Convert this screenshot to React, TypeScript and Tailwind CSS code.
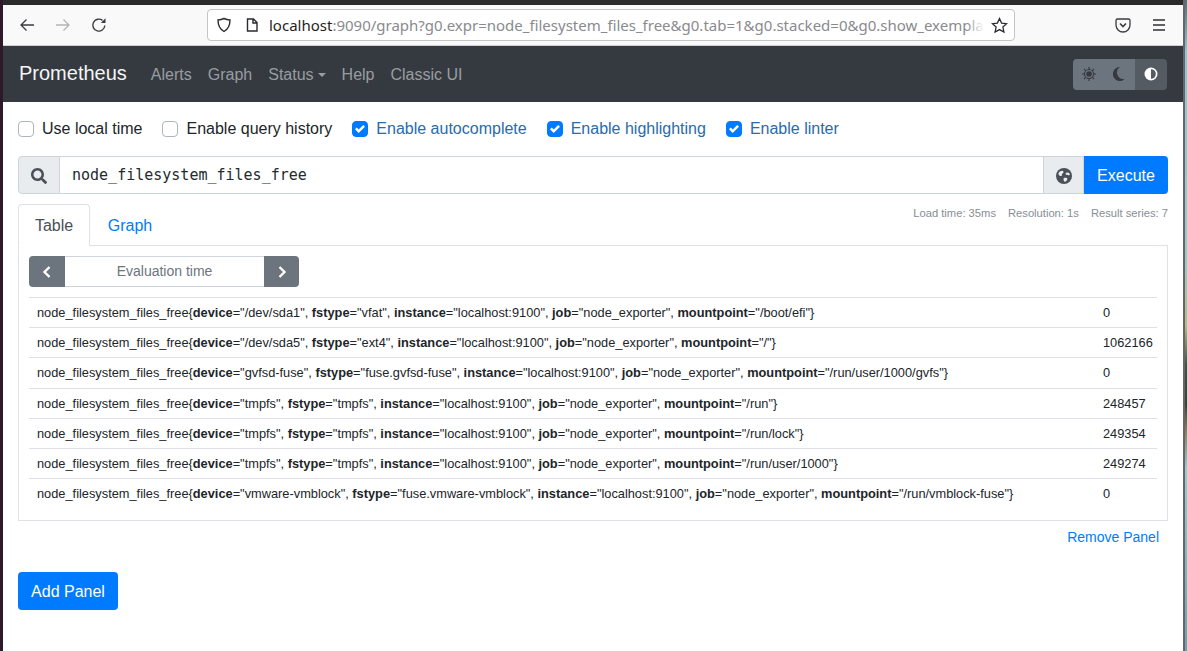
import React from "react";

const sans = "font-['Liberation_Sans',Arial,sans-serif]";

const Check = ({ on, label, mr }: { on: boolean; label: string; mr: string }) => (
  <label className={`flex items-center ${mr}`}>
    <span className={`w-4 h-4 rounded-[4px] border flex items-center justify-center ${on ? "bg-[#007bff] border-[#007bff]" : "bg-white border-[#adb5bd]"}`}>
      {on && (
        <svg width="10" height="10" viewBox="0 0 8 8"><path fill="#fff" d="M6.564.75l-3.59 3.612-1.538-1.55L0 4.26l2.974 2.99L8 2.193z" /></svg>
      )}
    </span>
    <span className={`ml-2 ${on ? "text-[#2a6ba8]" : "text-[#212529]"}`}>{label}</span>
  </label>
);

const rows: { labels: [string, string][]; value: string }[] = [
  { labels: [["device", "/dev/sda1"], ["fstype", "vfat"], ["instance", "localhost:9100"], ["job", "node_exporter"], ["mountpoint", "/boot/efi"]], value: "0" },
  { labels: [["device", "/dev/sda5"], ["fstype", "ext4"], ["instance", "localhost:9100"], ["job", "node_exporter"], ["mountpoint", "/"]], value: "1062166" },
  { labels: [["device", "gvfsd-fuse"], ["fstype", "fuse.gvfsd-fuse"], ["instance", "localhost:9100"], ["job", "node_exporter"], ["mountpoint", "/run/user/1000/gvfs"]], value: "0" },
  { labels: [["device", "tmpfs"], ["fstype", "tmpfs"], ["instance", "localhost:9100"], ["job", "node_exporter"], ["mountpoint", "/run"]], value: "248457" },
  { labels: [["device", "tmpfs"], ["fstype", "tmpfs"], ["instance", "localhost:9100"], ["job", "node_exporter"], ["mountpoint", "/run/lock"]], value: "249354" },
  { labels: [["device", "tmpfs"], ["fstype", "tmpfs"], ["instance", "localhost:9100"], ["job", "node_exporter"], ["mountpoint", "/run/user/1000"]], value: "249274" },
  { labels: [["device", "vmware-vmblock"], ["fstype", "fuse.vmware-vmblock"], ["instance", "localhost:9100"], ["job", "node_exporter"], ["mountpoint", "/run/vmblock-fuse"]], value: "0" },
];

export default function App() {
  return (
    <div className={`w-[1187px] h-[651px] overflow-hidden flex bg-[#2b2a2a] ${sans}`}>
      <div className="w-[3px] bg-[#2c1a2a]" />
      <div className="w-[1180px] flex flex-col">
        <div className="h-[5px] bg-[#2b2a2a]" />
        <div className="h-[41px] bg-[#f9f9fa] border-b border-[#cfcfd3] flex items-center font-['Noto_Sans',sans-serif]">
          <svg className="ml-[15px] shrink-0" width="18" height="18" viewBox="0 0 18 18" fill="none" stroke="#3b3b40" strokeWidth="1.3"><path d="M16 9H3M8.5 3.500L3 9l5.500 5.500" /></svg>
          <svg className="ml-[18px] shrink-0" width="18" height="18" viewBox="0 0 18 18" fill="none" stroke="#b4b4b7" strokeWidth="1.3"><path d="M2 9h13M9.500 3.500L15 9l-5.500 5.500" /></svg>
          <svg className="ml-[18px] shrink-0" width="18" height="18" viewBox="0 0 18 18" fill="none" stroke="#3b3b40" strokeWidth="1.4"><path d="M14.800 9.500A6 6 0 1 1 12.500 4.400" /><path d="M15.500 2.300v4.700h-4.700z" fill="#3b3b40" stroke="none" /></svg>
          <div className="ml-[99px] w-[808px] h-[32px] shrink-0 bg-white border border-[#c5c5c9] rounded-[4px] flex items-center text-[15px]">
            <svg className="ml-[8px] shrink-0" width="16" height="16" viewBox="0 0 16 16" fill="none" stroke="#2b2b30" strokeWidth="1.4"><path d="M8 1.500c2 1 3.800 1.400 6 1.500 0 5-1.600 9-6 11.500C3.600 12 2 8 2 3c2.200-.1 4-.5 6-1.500z" /></svg>
            <svg className="ml-[13px] shrink-0" width="14" height="16" viewBox="0 0 14 16" fill="none" stroke="#2b2b30" strokeWidth="1.4"><path d="M2.500 2h6L12 5.500V14H2.500zM8 2v4h4" /></svg>
            <span className="ml-[10px] whitespace-nowrap text-[#8a8a8e] relative">
              <span className="text-[#1f1f23]">localhost</span>:9090/graph?g0.expr=node_filesystem_files_free&amp;g0.tab=1&amp;g0.stacked=0&amp;g0.show_exempla
              <span className="absolute right-0 top-0 bottom-0 w-[18px] bg-gradient-to-r from-transparent to-white" />
            </span>
            <svg className="ml-auto mr-[6px] shrink-0" width="17" height="17" viewBox="0 0 17 17" fill="none" stroke="#2b2b30" strokeWidth="1.3"><path d="M8.500 1.500l2.100 4.600 5 .6-3.700 3.400 1 5-4.400-2.500-4.400 2.500 1-5L1.400 6.700l5-.6z" /></svg>
          </div>
          <svg className="ml-[100px] shrink-0" width="16" height="16" viewBox="0 0 16 16" fill="none" stroke="#3b3b40" strokeWidth="1.3"><path d="M2.500 2h11A1.500 1.500 0 0 1 15 3.500V8a7 7 0 0 1-14 0V3.500A1.500 1.500 0 0 1 2.500 2z" /><path d="M5 6.500L8 9.500l3-3" strokeWidth="1.600" /></svg>
          <svg className="ml-[21px] shrink-0" width="14" height="12" viewBox="0 0 14 12" stroke="#2f2f33" strokeWidth="1.300"><path d="M1 1h12M1 6h12M1 11h12" /></svg>
        </div>
        <nav className="h-[56px] bg-[#343a40] flex items-center pl-[16px] pr-[16px]">
          <span className="text-[20px] text-[#f5f5f6] mr-[24px] mb-[3px]">Prometheus</span>
          <div className="flex items-center text-[16px] text-[#9a9da0] gap-[16px] mt-[2px]">
            <span>Alerts</span>
            <span>Graph</span>
            <span className="flex items-center">Status<span className="ml-[4px] w-0 h-0 border-x-[4px] border-x-transparent border-t-[4px] border-t-[#9a9da0]" /></span>
            <span>Help</span>
            <span>Classic UI</span>
          </div>
          <div className="ml-auto flex h-[31px] rounded-[4px] overflow-hidden">
            <div className="w-[62px] bg-[#6c757d] flex items-center pl-[9px] gap-[16px]">
              <svg width="14" height="14" viewBox="0 0 16 16" fill="#343a40"><circle cx="8" cy="8" r="3.200" /><circle cx="8" cy="8" r="5.200" fill="none" stroke="#343a40" strokeWidth="1.300" /><path d="M8 0v2.500M8 13.500V16M0 8h2.500M13.500 8H16M2.300 2.300l1.800 1.800M11.900 11.900l1.800 1.800M2.300 13.700l1.800-1.800M11.900 4.100l1.800-1.800" stroke="#343a40" strokeWidth="1.300" /></svg>
              <svg width="13" height="14" viewBox="0 0 13 14" fill="#343a40"><path d="M8 0a7 7 0 1 0 5 11.800A6.500 6.500 0 0 1 8 0z" /></svg>
            </div>
            <div className="w-[32px] bg-[#545b62] flex items-center justify-center">
              <svg width="14" height="14" viewBox="0 0 14 14"><circle cx="7" cy="7" r="6.500" fill="#fff" /><path d="M7 2.200a4.800 4.800 0 0 1 0 9.600z" fill="#545b62" /></svg>
            </div>
          </div>
        </nav>
        <main className="flex-1 bg-white pl-[15px] pr-[15px] text-[#212529] text-[16px]">
          <div className="h-[52px] pt-[2px] flex items-center">
            <Check on={false} label="Use local time" mr="mr-[20px]" />
            <Check on={false} label="Enable query history" mr="mr-[20px]" />
            <Check on={true} label="Enable autocomplete" mr="mr-[20px]" />
            <Check on={true} label="Enable highlighting" mr="mr-[20px]" />
            <Check on={true} label="Enable linter" mr="" />
          </div>
          <div className="mt-[2px] h-[38px] flex">
            <div className="w-[42px] pt-[1px] bg-[#e9ecef] border border-[#ced4da] rounded-l-[4px] flex items-center justify-center">
              <svg width="16" height="16" viewBox="0 0 512 512" fill="#495057"><path d="M505 442.700L405.300 343c-4.500-4.500-10.600-7-17-7H372c27.600-35.300 44-79.700 44-128C416 93.100 322.900 0 208 0S0 93.100 0 208s93.100 208 208 208c48.300 0 92.700-16.400 128-44v16.300c0 6.400 2.500 12.500 7 17l99.700 99.700c9.400 9.400 24.600 9.400 33.900 0l28.300-28.300c9.400-9.400 9.400-24.600.1-34zM208 336c-70.700 0-128-57.200-128-128 0-70.700 57.200-128 128-128 70.700 0 128 57.200 128 128 0 70.700-57.200 128-128 128z" /></svg>
            </div>
            <div className="flex-1 pt-[1px] border-y border-[#ced4da] flex items-center pl-[12px] font-['DejaVu_Sans_Mono',monospace] text-[15px] text-[#24292e]">node_filesystem_files_free</div>
            <div className="w-[41px] pt-[1px] bg-[#e9ecef] border border-[#ced4da] flex items-center justify-center">
              <svg width="16" height="16" viewBox="0 0 16 16"><circle cx="8" cy="8" r="8" fill="#495057" /><path d="M4 3.500c1.500-1 3-.9 3.500.2.400 1-1 1.400-1.500 2.200-.4.800.4 1.400-.5 2C4.500 8.500 2.800 7.500 2.500 6c-.2-1 .5-1.800 1.500-2.500zM10 5c1-.7 2.500-.7 3.500.5.600.8.200 1.800-.7 1.800-1 0-1.300-.6-2-.5-.9.100-1.800-.9-.8-1.800zM8 10c1.300-.6 3-.3 3.300.7.300 1-.9 2.800-2.300 3-1.200.1-2-3.100-1-3.700z" fill="#e9ecef" /></svg>
            </div>
            <button className="w-[84px] bg-[#007bff] text-white rounded-r-[4px] pt-[1px]">Execute</button>
          </div>
          <div className="mt-[10px] relative">
            <div className="absolute right-0 top-[1px] text-[11.200px] text-[#868e96] flex gap-[12px]">
              <span>Load time: 35ms</span>
              <span>Resolution: 1s</span>
              <span>Result series: 7</span>
            </div>
            <div className="flex relative z-10 -mb-px h-[42px]">
              <div className="w-[72px] pt-[1px] bg-white border border-b-white border-[#dee2e6] rounded-t-[4px] flex items-center justify-center text-[#495057]">Table</div>
              <div className="w-[80px] pt-[1px] flex items-center justify-center text-[#007bff]">Graph</div>
            </div>
            <div className="border border-[#dee2e6] h-[276px] px-[10px] pt-[10px]">
              <div className="flex h-[31px] w-[270px]">
                <div className="w-[36px] bg-[#6c757d] rounded-l-[4px] flex items-center justify-center">
                  <svg width="10" height="14" viewBox="0 0 10 14" fill="none" stroke="#fff" strokeWidth="2.400"><path d="M7.500 2L2.500 7l5 5" /></svg>
                </div>
                <div className="flex-1 border-y border-[#ced4da] flex items-center justify-center text-[14px] text-[#6c757d]">Evaluation time</div>
                <div className="w-[35px] bg-[#6c757d] rounded-r-[4px] flex items-center justify-center">
                  <svg width="10" height="14" viewBox="0 0 10 14" fill="none" stroke="#fff" strokeWidth="2.400"><path d="M2.500 2l5 5-5 5" /></svg>
                </div>
              </div>
              <table className="mt-[10px] w-full text-[12.800px] leading-[19.200px] text-[#212529] border-collapse table-fixed">
                <tbody>
                  {rows.map((r, i) => (
                    <tr key={i} className="border-t border-[#dee2e6]">
                      <td className="pl-[8px] py-[5px] w-[1065px] whitespace-nowrap">
                        node_filesystem_files_free{"{"}
                        {r.labels.map(([k, v], j) => (
                          <span key={k}>
                            <b>{k}</b>="{v}"{j < r.labels.length - 1 ? ", " : ""}
                          </span>
                        ))}
                        {"}"}
                      </td>
                      <td className="pl-[9px] py-[5px]">{r.value}</td>
                    </tr>
                  ))}
                </tbody>
              </table>
            </div>
          </div>
          <div className="h-[33px] flex items-center justify-end pr-[9px] text-[14px] text-[#007bff]">Remove Panel</div>
          <button className="mt-[18px] w-[100px] h-[38px] pt-[1px] bg-[#007bff] text-white rounded-[4px]">Add Panel</button>
        </main>
      </div>
      <div className="w-[2px] bg-[#666668]" />
      <div className="w-[2px] bg-[linear-gradient(180deg,#5d6a72_0,#9fc0cc_8%,#a9c3c6_40%,#b8b98c_50%,#4a4f4a_56%,#3c3f3a_62%,#8a7a62_66%,#a8c4cc_72%,#7d9aa6_100%)]" />
    </div>
  );
}
